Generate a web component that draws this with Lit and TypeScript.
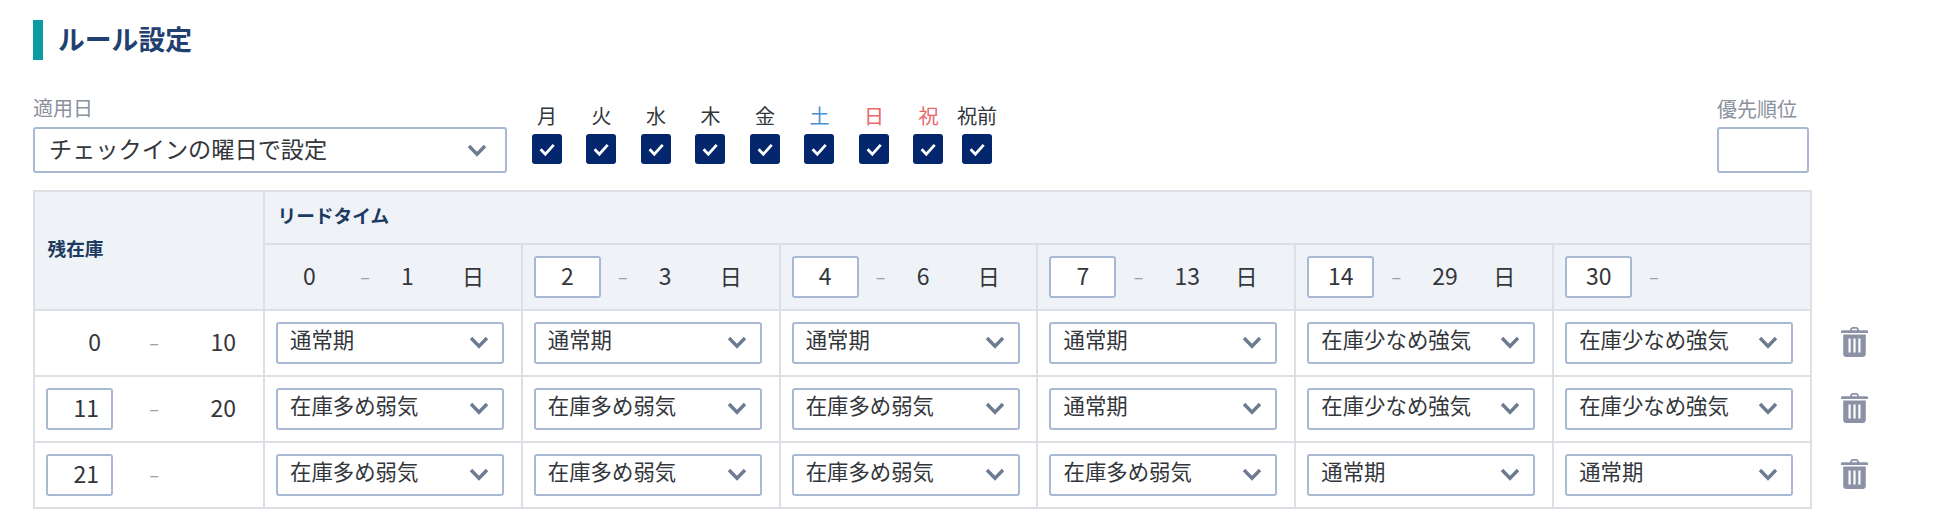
import { LitElement, html, css, svg } from "lit";
import { customElement } from "lit/decorators.js";

const N = "通常期";
const M = "在庫多め弱気";
const S = "在庫少なめ強気";

const leadTimes: { from: string; to: string; editable: boolean }[] = [
  { from: "0", to: "1", editable: false },
  { from: "2", to: "3", editable: true },
  { from: "4", to: "6", editable: true },
  { from: "7", to: "13", editable: true },
  { from: "14", to: "29", editable: true },
  { from: "30", to: "", editable: true },
];

const rows: { from: string; to: string; editable: boolean; values: string[] }[] = [
  { from: "0", to: "10", editable: false, values: [N, N, N, N, S, S] },
  { from: "11", to: "20", editable: true, values: [M, M, M, N, S, S] },
  { from: "21", to: "", editable: true, values: [M, M, M, M, N, N] },
];

const days = [
  { t: "月", c: "" },
  { t: "火", c: "" },
  { t: "水", c: "" },
  { t: "木", c: "" },
  { t: "金", c: "" },
  { t: "土", c: "sat" },
  { t: "日", c: "sun" },
  { t: "祝", c: "sun" },
  { t: "祝前", c: "last" },
];

const chevron = svg`<svg class="chev" viewBox="0 0 20 13" width="20" height="13"><path d="M2 2l8 8.200L18 2" fill="none" stroke="#6d7b91" stroke-width="3.400"/></svg>`;
const check = svg`<svg viewBox="0 0 30 30" width="30" height="30"><path d="M8.600 15.200l4.700 4.900 8.400-9.200" fill="none" stroke="#fff" stroke-width="2.800"/></svg>`;
const trash = svg`<svg viewBox="0 0 27 30" width="27" height="30"><path fill="#8b92a6" d="M9 3.200C9 1.400 10.200 0 12 0h3c1.800 0 3 1.400 3 3.200h7.500c.8 0 1.500.6 1.500 1.400V6H0V4.600c0-.8.700-1.400 1.500-1.400H9zm1.800 0h5.400c0-.8-.5-1.400-1.200-1.400h-3c-.7 0-1.200.6-1.200 1.400zM2.200 7.500h22.600V27c0 1.700-1.300 3-3 3H5.200c-1.700 0-3-1.300-3-3V7.500zm5.300 4v14h2.200v-14H7.500zm4.900 0v14h2.200v-14h-2.200zm4.900 0v14h2.200v-14h-2.200zm4.900 0z"/></svg>`;

@customElement("app-root")
export class AppRoot extends LitElement {
  static styles = css`
    :host {
      display: block;
      width: 1950px;
      height: 529px;
      box-sizing: border-box;
      padding: 20px 0 0 33px;
      background: #fff;
      font-family: "Noto Sans CJK JP", "Noto Sans", sans-serif;
      color: #33363b;
      overflow: hidden;
    }
    .title {
      display: flex;
      align-items: center;
      height: 40px;
      border-left: 10px solid #0b9ca3;
      padding-left: 15px;
      font-size: 26.800px;
      line-height: 36px;
      font-weight: 700;
      color: #1f4070;
      margin-bottom: 37px;
    }
    .title span {
      margin-top: -3px;
    }
    .top {
      display: flex;
      width: 1778px;
      height: 93px;
    }
    .label {
      font-size: 20px;
      line-height: 22px;
      height: 30px;
      color: #8a919c;
    }
    .priority .label {
      line-height: 24px;
    }
    .box {
      box-sizing: border-box;
      background: #fff;
      border: 2px solid #a9b9d3;
      border-radius: 3px;
    }
    .applies-select {
      display: flex;
      align-items: center;
      justify-content: space-between;
      width: 474px;
      height: 46px;
      padding: 0 18px 0 14px;
      font-size: 23.200px;
    }
    .applies-select span {
      margin-top: -5px;
    }
    .days {
      display: flex;
      margin-left: 12.700px;
      padding-top: 5px;
    }
    .day {
      display: flex;
      flex-direction: column;
      align-items: center;
      width: 54.500px;
      font-size: 20px;
      line-height: 28px;
    }
    .day span {
      height: 32px;
    }
    .day.last {
      width: 42.500px;
    }
    .day.sat span {
      color: #4a90d2;
    }
    .day.sun span {
      color: #e8676d;
    }
    .cb {
      width: 30px;
      height: 30px;
      border-radius: 3px;
      background: #03266c;
    }
    .cb svg {
      display: block;
    }
    .priority {
      margin-left: auto;
      margin-right: 2px;
    }
    .priority .box {
      width: 92px;
      height: 46px;
    }
    .main {
      display: flex;
    }
    table {
      border-collapse: collapse;
      table-layout: fixed;
      width: 1777px;
    }
    th,
    td {
      border: 2px solid #dcdfe4;
      padding: 0 0 0 11px;
      box-sizing: border-box;
      text-align: left;
      font-weight: 400;
    }
    th {
      background: #eff3f8;
    }
    th.head {
      font-size: 18.700px;
      font-weight: 700;
      color: #1d3a5f;
      padding: 0 0 6px 12.500px;
    }
    .r1 {
      height: 53px;
    }
    .r2 {
      height: 66px;
    }
    .r3 {
      height: 66px;
    }
    .lead {
      display: grid;
      grid-template-columns: 67px 44px 75px 22px;
      align-items: center;
      font-size: 23px;
    }
    .stock {
      display: grid;
      grid-template-columns: 67px 82px 41px;
      align-items: center;
      font-size: 23px;
    }
    .num {
      box-sizing: border-box;
      width: 67px;
      height: 42px;
      padding-bottom: 4px;
      display: flex;
      align-items: center;
    }
    .lead .num {
      justify-content: center;
    }
    .stock .num {
      justify-content: flex-end;
      padding-right: 12px;
    }
    .dash {
      text-align: center;
      color: #9aa1ac;
      font-size: 18px;
      padding-bottom: 2px;
    }
    .to {
      padding-left: 14px;
      padding-bottom: 4px;
    }
    .stock .to {
      padding-left: 0;
      text-align: right;
    }
    .unit {
      text-align: center;
      font-size: 22px;
      padding-bottom: 4px;
    }
    .sel {
      display: flex;
      align-items: center;
      justify-content: space-between;
      width: 228px;
      height: 42px;
      padding: 0 13px 2px 12px;
      font-size: 21.400px;
    }
    .sel span {
      margin-top: -7px;
    }
    .actions {
      padding: 119px 0 0 29px;
    }
    .trash {
      height: 66px;
      display: flex;
      align-items: center;
    }
    .trash svg {
      display: block;
    }
  `;

  private numCell(value: string, editable: boolean) {
    return html`<div class="num ${editable ? "box" : ""}">${value}</div>`;
  }

  render() {
    return html`
      <div class="title"><span>ルール設定</span></div>
      <div class="top">
        <div>
          <div class="label">適用日</div>
          <div class="box applies-select"><span>チェックインの曜日で設定</span>${chevron}</div>
        </div>
        <div class="days">
          ${days.map(
            (d) => html`<div class="day ${d.c}"><span>${d.t}</span><div class="cb">${check}</div></div>`
          )}
        </div>
        <div class="priority">
          <div class="label">優先順位</div>
          <div class="box"></div>
        </div>
      </div>
      <div class="main">
        <table>
          <colgroup>
            <col style="width:230px" />
            ${leadTimes.map(() => html`<col style="width:257.830px" />`)}
          </colgroup>
          <thead>
            <tr class="r1">
              <th class="head" rowspan="2">残在庫</th>
              <th class="head" colspan="6">リードタイム</th>
            </tr>
            <tr class="r2">
              ${leadTimes.map(
                (l) => html`<th>
                  <div class="lead">
                    ${this.numCell(l.from, l.editable)}
                    <div class="dash">–</div>
                    <div class="to">${l.to}</div>
                    <div class="unit">${l.to ? "日" : ""}</div>
                  </div>
                </th>`
              )}
            </tr>
          </thead>
          <tbody>
            ${rows.map(
              (r) => html`<tr class="r3">
                <td>
                  <div class="stock">
                    ${this.numCell(r.from, r.editable)}
                    <div class="dash">–</div>
                    <div class="to">${r.to}</div>
                  </div>
                </td>
                ${r.values.map(
                  (v) => html`<td><div class="box sel"><span>${v}</span>${chevron}</div></td>`
                )}
              </tr>`
            )}
          </tbody>
        </table>
        <div class="actions">
          ${rows.map(() => html`<div class="trash">${trash}</div>`)}
        </div>
      </div>
    `;
  }
}
